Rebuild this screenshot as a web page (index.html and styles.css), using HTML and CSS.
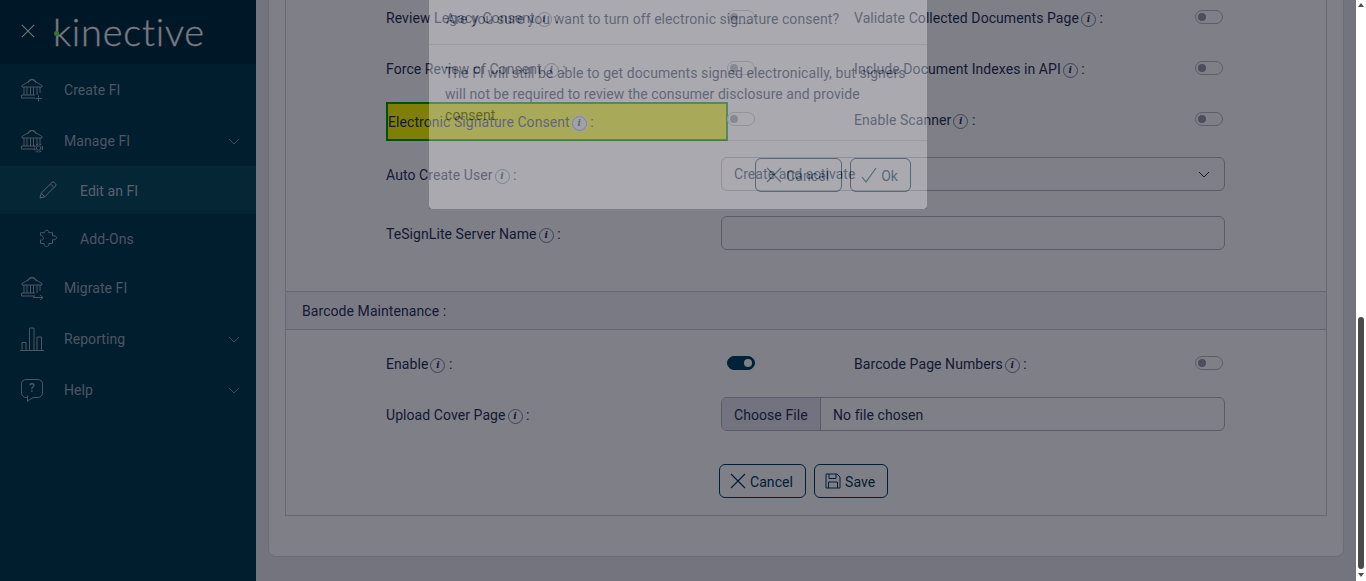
FILE: index.html
```html
<!DOCTYPE html>
<html lang="en">
<head>
<meta charset="utf-8">
<title>Edit an FI</title>
<link rel="stylesheet" href="styles.css">
</head>
<body>
<svg class="defs" width="0" height="0" aria-hidden="true">
  <symbol id="bank" viewBox="0 0 24 24">
    <path d="M2 7.500 12 1.500l10 6v1.500H2zM8 5.200a4 4 0 0 1 8 0M4 9v8M7 9v8M10.500 9v8M13.500 9v8M17 9v8M20 9v6M2 17h13M1.500 20h13.500M1.500 17v3" fill="none" stroke="currentColor"/>
  </symbol>
  <symbol id="chev" viewBox="0 0 12 7">
    <path d="M1 1l5 5 5-5" fill="none" stroke="currentColor"/>
  </symbol>
  <symbol id="x" viewBox="0 0 16 16">
    <path d="M1 1l14 14M15 1 1 15" fill="none" stroke="currentColor" stroke-width="1.200"/>
  </symbol>
</svg>

<div class="app">
  <nav class="sidebar">
    <header class="brand">
      <svg class="close"><use href="#x"/></svg>
      <span class="logo">kinective<i class="logo-dot"></i></span>
    </header>
    <a class="item">
      <svg class="ico" viewBox="0 0 24 24"><use href="#bank"/><path d="M18.500 17.500v6M15.500 20.500h6.500" fill="none" stroke="currentColor"/></svg>
      <span>Create FI</span>
    </a>
    <a class="item">
      <svg class="ico" viewBox="0 0 24 24"><use href="#bank"/><circle cx="18.500" cy="19" r="2.200" fill="none" stroke="currentColor"/><circle cx="18.500" cy="19" r="4" fill="none" stroke="currentColor" stroke-dasharray="2 1.200" stroke-width="1.200"/></svg>
      <span>Manage FI</span>
      <svg class="caret"><use href="#chev"/></svg>
    </a>
    <a class="item sub active">
      <svg class="ico-sub" viewBox="0 0 18 18"><path d="M1 17l1.200-4.800L13 1.400a1.500 1.500 0 0 1 2.200 0l1.300 1.300a1.500 1.500 0 0 1 0 2.200L5.800 15.800zM2.200 12.200l3.600 3.600M11.500 3l3.500 3.500" fill="none" stroke="currentColor"/></svg>
      <span>Edit an FI</span>
    </a>
    <a class="item sub">
      <svg class="ico-sub" viewBox="0 0 18 18"><path d="M7 1.500c1.500-.8 3 .2 2.600 2.200h3.900v3.200c2-.6 4 .2 4 1.900s-2 2.500-4 1.900v3.800H9.800c.5 2-.8 3-2.300 3s-2.800-1-2.300-3H1.500v-3.600c1.800.5 2.900-.5 2.900-1.700S3.300 6 1.500 6.500V3.700h4.200C5.400 2.800 6 2 7 1.500z" fill="none" stroke="currentColor"/></svg>
      <span>Add-Ons</span>
    </a>
    <a class="item">
      <svg class="ico" viewBox="0 0 24 24"><use href="#bank"/><path d="M13 21.500h10M20 19l3 2.500-3 2.500" fill="none" stroke="currentColor"/></svg>
      <span>Migrate FI</span>
    </a>
    <a class="item">
      <svg class="ico" viewBox="0 0 24 24"><path d="M0 23.500h24M2 23V15.500h4V23M9.500 23V1h4.500v22M17 23V10h4.500v13" fill="none" stroke="currentColor"/></svg>
      <span>Reporting</span>
      <svg class="caret"><use href="#chev"/></svg>
    </a>
    <a class="item">
      <span class="help"><b>?</b></span>
      <span>Help</span>
      <svg class="caret"><use href="#chev"/></svg>
    </a>
  </nav>

  <main class="main">
    <section class="card">
      <div class="fieldset">
        <div class="fields">
          <div class="row">
            <div class="label">Review Legacy Consent<span class="info">i</span> :</div>
            <div class="ctl"><span class="toggle"></span></div>
            <div class="label">Validate Collected Documents Page<span class="info">i</span> :</div>
            <div class="ctl-end"><span class="toggle"></span></div>
          </div>
          <div class="row">
            <div class="label">Force Review of Consent<span class="info">i</span> :</div>
            <div class="ctl"><span class="toggle"></span></div>
            <div class="label">Include Document Indexes in API<span class="info">i</span> :</div>
            <div class="ctl-end"><span class="toggle"></span></div>
          </div>
          <div class="row">
            <div class="label highlight">Electronic Signature Consent<span class="info">i</span> :</div>
            <div class="ctl"><span class="toggle"></span></div>
            <div class="label">Enable Scanner<span class="info">i</span> :</div>
            <div class="ctl-end"><span class="toggle"></span></div>
          </div>
          <div class="row wide after-21">
            <div class="label">Auto Create User<span class="info">i</span> :</div>
            <div class="field select">Create and activate<svg class="sel-chev"><use href="#chev"/></svg></div>
          </div>
          <div class="row wide after-25">
            <div class="label">TeSignLite Server Name<span class="info">i</span> :</div>
            <div class="field"></div>
          </div>
        </div>

        <h3 class="band">Barcode Maintenance :</h3>

        <div class="fields lower">
          <div class="row">
            <div class="label">Enable<span class="info">i</span> :</div>
            <div class="ctl"><span class="toggle on"></span></div>
            <div class="label">Barcode Page Numbers<span class="info">i</span> :</div>
            <div class="ctl-end"><span class="toggle"></span></div>
          </div>
          <div class="row wide">
            <div class="label">Upload Cover Page<span class="info">i</span> :</div>
            <div class="field file"><span class="file-btn">Choose File</span><span class="file-name">No file chosen</span></div>
          </div>
          <div class="actions">
            <button class="btn"><svg class="btn-x"><use href="#x"/></svg>Cancel</button>
            <button class="btn"><svg class="btn-save" viewBox="0 0 16 16"><path d="M1 1h11l3 3v11H1zM4 1v4.500h7V1M3.500 15V9h9v6" fill="none" stroke="currentColor"/></svg>Save</button>
          </div>
        </div>
      </div>
    </section>
  </main>

  <div class="scrollbar">
    <i class="arrow up"></i>
    <i class="thumb"></i>
    <i class="arrow down"></i>
  </div>
</div>

<div class="overlay"></div>

<div class="modal">
  <div class="modal-head">Are you sure you want to turn off electronic signature consent?</div>
  <div class="modal-body">The FI will still be able to get documents signed electronically, but signers will not be required to review the consumer disclosure and provide consent.</div>
  <div class="modal-foot">
    <button class="btn"><svg class="btn-x"><use href="#x"/></svg>Cancel</button>
    <button class="btn"><svg class="btn-x" viewBox="0 0 16 16"><path d="M1 10l4 5L15 1" fill="none" stroke="currentColor" stroke-width="1.200"/></svg>Ok</button>
  </div>
</div>
</body>
</html>
```
FILE: styles.css
```css
* { box-sizing: border-box; }
html, body { margin: 0; height: 100%; overflow: hidden; }
body { font: 14px/21px Roboto, "Liberation Sans", sans-serif; letter-spacing: .07px; color: #2a3558; background: #e9e9ec; }
.defs { position: absolute; }

.app { display: flex; height: 581px; }

/* sidebar */
.sidebar { width: 256px; flex: none; background: #003c4c; color: #9aa8b6; }
.brand { height: 64px; display: flex; align-items: center; background: #002f3e; padding-left: 21px; }
.close { width: 14px; height: 14px; color: #e8e8ec; margin-top: -2px; }
.logo { position: relative; margin-left: 18px; margin-top: -2px; font: 300 38px/40px Lato, Roboto, sans-serif; color: #f2f2f5; letter-spacing: .75px; -webkit-text-stroke: .3px #f2f2f5; }
.logo-dot { position: absolute; left: 1px; top: 20px; width: 5px; height: 5px; border-radius: 50%; background: #70e040; }
.item { display: flex; align-items: center; height: 51px; padding-top: 2px; padding-left: 64px; position: relative; }
.item.sub { height: 48px; padding-left: 80px; }
.item.active { background: #084c5a; color: #b4c0cc; }
.ico { position: absolute; left: 20px; top: 14px; width: 24px; height: 24px; }
.ico-sub { position: absolute; left: 39px; top: 15px; width: 18px; height: 18px; }
.caret { position: absolute; left: 228px; top: 23px; width: 12px; height: 7px; color: #7f92a6; }
.help { position: absolute; left: 21px; top: 15px; width: 22px; height: 19px; border: 1px solid currentColor; border-radius: 5px; text-align: center; font-size: 12px; line-height: 17px; }
.help b { font-weight: 500; }
.help::after { content: ""; position: absolute; left: 5px; bottom: -3px; width: 5px; height: 5px; border-left: 1px solid currentColor; border-bottom: 1px solid currentColor; background: #003c4c; transform: skewY(-30deg); }

/* content */
.main { flex: 1; min-width: 0; padding: 0 12px; overflow: hidden; }
.card { background: #fff; border: 1px solid #d8d8de; border-top: 0; border-radius: 0 0 8px 8px; padding: 0 16px 40px; }
.fieldset { border: 1px solid #d0d0d8; border-top: 0; }
.fields { padding-left: 100px; width: 939px; }
.row { display: grid; grid-template-columns: 335px 133px 341px 30px; grid-template-rows: 34px; height: 34px; align-items: center; margin-bottom: 17px; }
.row.wide { grid-template-columns: 335px 504px; }
.row.after-21 { margin-top: 21px; margin-bottom: 25px; }
.row.after-25 { margin-bottom: 41px; }
.row:nth-child(3) { margin-bottom: 0; }
.label { white-space: nowrap; padding-top: 2px; }
.info { display: inline-block; width: 15px; height: 15px; margin-left: 2px; border: 1px solid #7f88a4; border-radius: 50%; font: italic 700 9px/13px "DejaVu Serif", "Liberation Serif", serif; text-align: center; vertical-align: 1px; }
.highlight { align-self: start; width: 342px; height: 39px; line-height: 35px; padding-top: 1px; background: #ff0; border: 2px solid #00a000; }
.highlight .info { box-shadow: 0 0 0 1px #e8e8f0; background: #e8e8f0; }
.ctl { padding-left: 6px; display: flex; align-items: center; }
.ctl-end { display: flex; align-items: center; }
.toggle { position: relative; display: block; width: 28px; height: 14px; border: 1px solid #b8bac4; border-radius: 7px; background: #fff; }
.toggle::after { content: ""; position: absolute; left: 2px; top: 2px; width: 8px; height: 8px; border-radius: 50%; background: #9a9ca8; }
.toggle.on { background: #004560; border-color: #004560; }
.toggle.on::after { left: auto; right: 2px; background: #fff; }
.field { height: 34px; width: 504px; border: 1px solid #b4b6c2; border-radius: 6px; background: #fff; display: flex; align-items: center; padding-top: 1px; padding-left: 12px; position: relative; }
.sel-chev { position: absolute; right: 14px; top: 13px; width: 12px; height: 7px; color: #2a3558; }
.file { padding: 0; overflow: hidden; }
.file-btn { width: 99px; height: 100%; padding-left: 12px; line-height: 34px; background: #e6e7ee; border-right: 1px solid #b4b6c2; }
.file-name { margin-left: 12px; padding-top: 2px; }
.band { margin: 0; height: 39px; padding-left: 16px; font: 400 14px/39px Roboto, sans-serif; letter-spacing: .07px; background: #f5f5f8; border-top: 1px solid #ccccd4; border-bottom: 1px solid #ccccd4; }
.lower { padding-top: 16px; padding-bottom: 17px; }
.lower .row.wide { margin-bottom: 33px; }
.actions { display: flex; gap: 8px; margin-left: 333px; }
.btn { display: inline-flex; align-items: center; gap: 4px; height: 34px; padding: 2px 12px 0 10px; font: 14px/21px Roboto, sans-serif; letter-spacing: .07px; color: #00405c; background: transparent; border: 1px solid #00405c; border-radius: 6px; }
.btn-x { width: 16px; height: 16px; margin-top: -2px; }
.btn-save { width: 16px; height: 16px; margin-top: -2px; }

/* scrollbar */
.scrollbar { width: 10px; flex: none; background: #fff; position: relative; }
.arrow { position: absolute; left: 2px; width: 0; height: 0; border-left: 3px solid transparent; border-right: 3px solid transparent; }
.arrow.up { top: 3px; border-bottom: 4px solid #505050; }
.arrow.down { bottom: 4px; border-top: 4px solid #505050; }
.thumb { position: absolute; left: 2px; top: 317px; width: 6px; height: 252px; border-radius: 3px; background: #4b4b4b; }

/* modal layer */
.overlay { position: fixed; left: 0; top: 0; right: 10px; bottom: 0; background: rgba(0, 0, 15, .5); }
.modal { position: fixed; left: 429px; top: 0; width: 498px; height: 209px; background: #fff; opacity: .33; border-radius: 0 0 4px 4px; }
.modal-head { height: 45px; padding: 9px 17px 0; border-bottom: 1px solid #d4d4d4; }
.modal-body { height: 96px; padding: 18px 16px 0; border-bottom: 1px solid #d4d4d4; }
.modal-foot { display: flex; justify-content: flex-end; gap: 8px; padding: 17px 16px 0; }
```
